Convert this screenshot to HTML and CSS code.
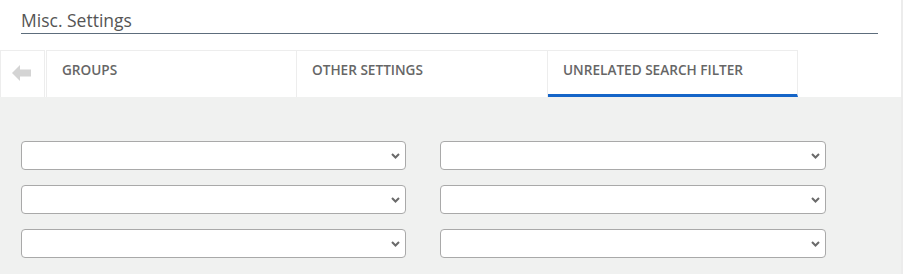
FILE: index.html
```html
<!DOCTYPE html>
<html>
<head>
    <title>Misc. Settings</title>
    <meta name="viewport" content="width=device-width, initial-scale=1">
    <link rel="stylesheet" href="styles.css">
</head>
<body>
    <div class="page">
        <div class="page-header">
            <h1 class="page-title">Misc. Settings</h1>
        </div>

        <div class="tab-bar">
            <button class="tab-back" title="Back">
                <svg width="19" height="16" viewBox="0 0 19 16">
                    <path d="M0 8 L8 0 L8 4.5 L19 4.5 L19 11.5 L8 11.5 L8 16 Z" fill="#d4d4d4"/>
                </svg>
            </button>
            <div class="tab">Groups</div>
            <div class="tab">Other Settings</div>
            <div class="tab active">Unrelated Search Filter</div>
        </div>

        <div class="tab-panel">
            <div class="filter-grid">
                <div class="select-wrap"><select class="filter-select"><option></option></select><svg class="chevron" width="9" height="6" viewBox="0 0 9 6"><path d="M1 1 L4.5 4.5 L8 1" fill="none" stroke="#6a6a6a" stroke-width="2"/></svg></div>
                <div class="select-wrap"><select class="filter-select"><option></option></select><svg class="chevron" width="9" height="6" viewBox="0 0 9 6"><path d="M1 1 L4.5 4.5 L8 1" fill="none" stroke="#6a6a6a" stroke-width="2"/></svg></div>
                <div class="select-wrap"><select class="filter-select"><option></option></select><svg class="chevron" width="9" height="6" viewBox="0 0 9 6"><path d="M1 1 L4.5 4.5 L8 1" fill="none" stroke="#6a6a6a" stroke-width="2"/></svg></div>
                <div class="select-wrap"><select class="filter-select"><option></option></select><svg class="chevron" width="9" height="6" viewBox="0 0 9 6"><path d="M1 1 L4.5 4.5 L8 1" fill="none" stroke="#6a6a6a" stroke-width="2"/></svg></div>
                <div class="select-wrap"><select class="filter-select"><option></option></select><svg class="chevron" width="9" height="6" viewBox="0 0 9 6"><path d="M1 1 L4.5 4.5 L8 1" fill="none" stroke="#6a6a6a" stroke-width="2"/></svg></div>
                <div class="select-wrap"><select class="filter-select"><option></option></select><svg class="chevron" width="9" height="6" viewBox="0 0 9 6"><path d="M1 1 L4.5 4.5 L8 1" fill="none" stroke="#6a6a6a" stroke-width="2"/></svg></div>
            </div>
        </div>
    </div>
</body>
</html>
```

FILE: styles.css
```css
body {
    margin: 0;
    font-family: "Open Sans", "Liberation Sans", sans-serif;
    color: #555;
    background: #fff;
}
.page {
    width: 901px;
    height: 274px;
    border-right: 2px solid #ececec;
    display: flex;
    flex-direction: column;
}
.page-header {
    padding: 8px 23px 0 21px;
}
.page-title {
    margin: 0;
    font-size: 17.5px;
    font-weight: normal;
    line-height: 25px;
    color: #555;
    border-bottom: 1px solid #5d6d7c;
}
.tab-bar {
    display: flex;
    margin-top: 16px;
    height: 47px;
}
.tab-back {
    width: 45px;
    height: 47px;
    padding: 0;
    margin-right: 1px;
    background: #fff;
    border: 1px solid #ededed;
    border-bottom: none;
    display: flex;
    align-items: center;
    justify-content: center;
    cursor: pointer;
}
.tab-back svg {
    margin-right: 2px;
    margin-bottom: 2px;
}
.tab {
    width: 250px;
    box-sizing: border-box;
    padding: 0 15px;
    border: 1px solid #ededed;
    border-left: none;
    border-bottom: none;
    font-size: 13.6px;
    font-weight: 600;
    text-transform: uppercase;
    line-height: 38px;
    color: #666;
}
.tab:first-of-type {
    width: 251px;
    border-left: 1px solid #ededed;
}
.tab:nth-child(3) {
    width: 251px;
}
.tab.active {
    border-bottom: 3px solid #1565c8;
}
.tab-panel {
    flex: 1;
    background: #f0f1f0;
    padding: 44px 0 0 21px;
}
.filter-grid {
    display: grid;
    grid-template-columns: 385px 386px;
    column-gap: 34px;
    row-gap: 15px;
}
.select-wrap {
    position: relative;
    height: 29px;
}
.filter-select {
    appearance: none;
    width: 100%;
    height: 29px;
    background: #fff;
    border: 1px solid #a9a9a9;
    border-radius: 4px;
    font-family: inherit;
    font-size: 13px;
}
.chevron {
    position: absolute;
    right: 6px;
    top: 12px;
    pointer-events: none;
}
```
